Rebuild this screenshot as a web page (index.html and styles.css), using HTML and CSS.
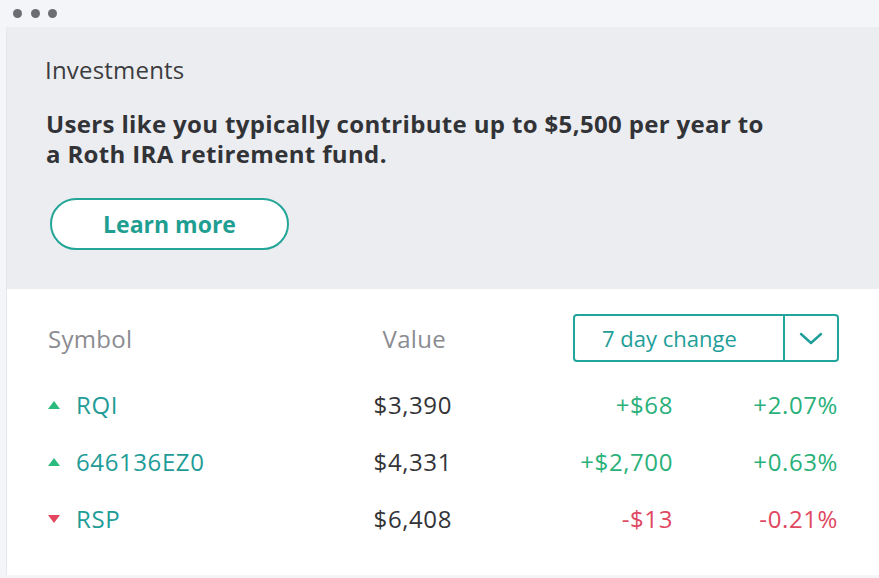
FILE: index.html
```html
<!DOCTYPE html>
<html>
<head>
<meta charset="utf-8">
<link rel="stylesheet" href="styles.css">
</head>
<body>
<div class="topbar">
  <span class="dot"></span><span class="dot"></span><span class="dot"></span>
</div>
<div class="card">
  <section class="promo">
    <div class="label">Investments</div>
    <p class="message">Users like you typically contribute up to $5,500 per year to<br>a Roth IRA retirement fund.</p>
    <button class="learn">Learn more</button>
  </section>
  <section class="table">
    <div class="row head">
      <div class="c-sym">Symbol</div>
      <div class="c-val head-val">Value</div>
      <div class="dropdown">
        <span class="dd-label">7 day change</span>
        <span class="dd-arrow">
          <svg width="24" height="13" viewBox="0 0 24 13"><path d="M2 2 L12 11 L22 2" fill="none" stroke="#1f9e99" stroke-width="2.4" stroke-linecap="round" stroke-linejoin="round"/></svg>
        </span>
      </div>
    </div>
    <div class="row">
      <div class="c-sym"><span class="tri up"></span><span class="sym">RQI</span></div>
      <div class="c-val">$3,390</div>
      <div class="c-chg pos">+$68</div>
      <div class="c-pct pos">+2.07%</div>
    </div>
    <div class="row">
      <div class="c-sym"><span class="tri up"></span><span class="sym">646136EZ0</span></div>
      <div class="c-val">$4,331</div>
      <div class="c-chg pos">+$2,700</div>
      <div class="c-pct pos">+0.63%</div>
    </div>
    <div class="row">
      <div class="c-sym"><span class="tri down"></span><span class="sym">RSP</span></div>
      <div class="c-val">$6,408</div>
      <div class="c-chg neg">-$13</div>
      <div class="c-pct neg">-0.21%</div>
    </div>
  </section>
</div>
</body>
</html>
```

FILE: styles.css
```css
* { box-sizing: border-box; }
html, body { margin: 0; padding: 0; }
body {
  background: #f4f5f9;
  font-family: "Open Sans", Lato, sans-serif;
  width: 879px;
  height: 578px;
  overflow: hidden;
}
.topbar {
  height: 27px;
  display: flex;
  align-items: center;
  gap: 8.5px;
  padding-left: 13px;
}
.dot {
  width: 9px;
  height: 9px;
  border-radius: 50%;
  background: #6c6d72;
}
.card {
  margin-left: 6px;
  border-left: 1px solid #e6e7eb;
  height: 548px;
  background: #fff;
}
.promo {
  background: #ecedf1;
  height: 262px;
  padding: 28px 0 0 38px;
}
.label {
  font-size: 24px;
  line-height: 30px;
  color: #3b3c40;
  letter-spacing: 0.2px;
}
.message {
  margin: 24px 0 0 1px;
  font-size: 24px;
  line-height: 30px;
  font-weight: 700;
  letter-spacing: 0.35px;
  color: #323337;
  white-space: nowrap;
}
.learn {
  margin: 29px 0 0 5px;
  width: 239px;
  height: 52px;
  border: 2.5px solid #23a597;
  border-radius: 26px;
  background: #fff;
  color: #1f9e92;
  font-family: inherit;
  font-size: 23px;
  font-weight: 700;
  padding: 0;
}
.table {
  padding: 25px 0 0 40px;
}
.row {
  display: grid;
  grid-template-columns: 253px 152px 221px 166px;
  align-items: center;
  height: 57px;
  font-size: 24px;
  letter-spacing: 0.6px;
  color: #333438;
}
.row.head {
  height: 48px;
  color: #8b8c91;
  margin-bottom: 14px;
  letter-spacing: 0.3px;
}
.c-sym { display: flex; align-items: center; padding-left: 1px; }
.c-val, .c-chg, .c-pct { text-align: right; }
.c-pct { padding-right: 1px; }
.head-val { padding-right: 6px; }
.tri {
  width: 0; height: 0;
  border-left: 6.5px solid transparent;
  border-right: 6.5px solid transparent;
  margin-right: 16px;
}
.tri.up { border-bottom: 8px solid #2cbb7e; }
.tri.down { border-top: 8px solid #e2475f; }
.sym { color: #1f9c97; }
.pos { color: #2ab17a; }
.neg { color: #df4862; }
.dropdown {
  grid-column: 3 / 5;
  justify-self: end;
  width: 266px;
  height: 48px;
  border: 2px solid #22a59c;
  border-radius: 4px;
  display: flex;
  letter-spacing: 0;
}
.dd-label {
  flex: 1;
  display: flex;
  align-items: center;
  padding-left: 27px;
  color: #1f9e99;
  font-size: 22px;
  border-right: 2px solid #22a59c;
}
.dd-arrow {
  width: 52px;
  display: flex;
  align-items: center;
  justify-content: center;
}
```
